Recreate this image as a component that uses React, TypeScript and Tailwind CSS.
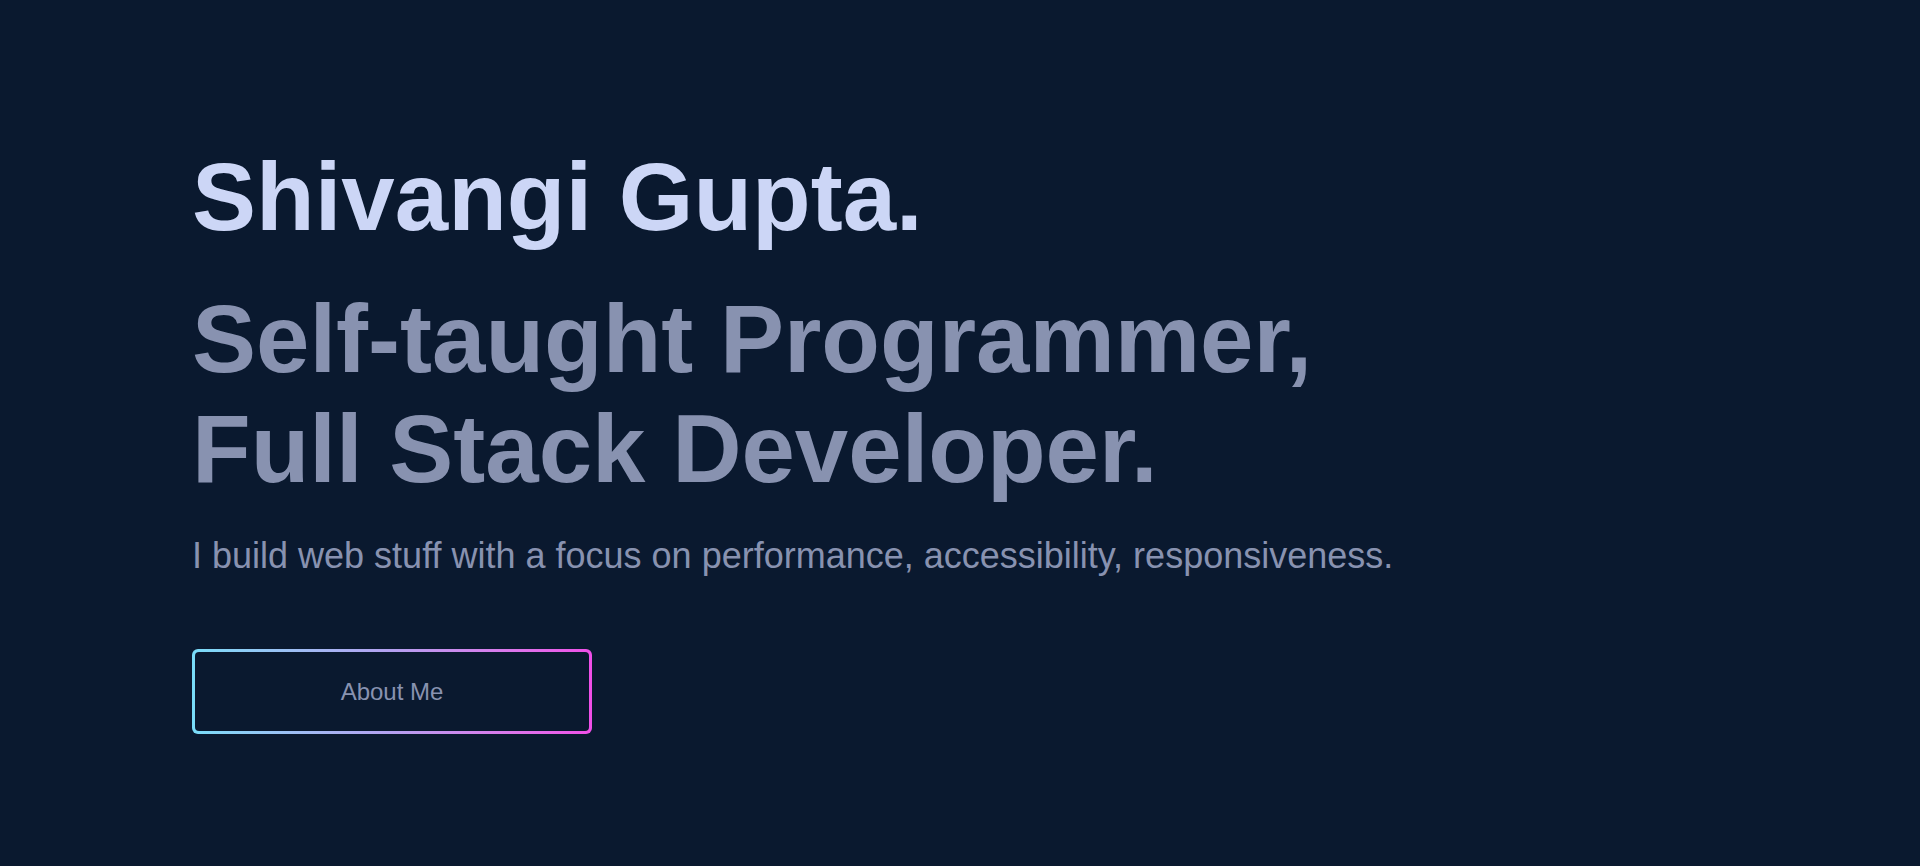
export default function App() {
  return (
    <div
      className="min-h-screen w-full bg-[#0a192f]"
      style={{ fontFamily: "'Liberation Sans', Arial, sans-serif" }}
    >
      <section className="flex flex-col items-start pl-[192px] pt-[142px]">
        {/* Name */}
        <h1 className="text-[96px] font-bold leading-[110px] text-[#ccd6f6]">Shivangi Gupta.</h1>

        {/* Tagline */}
        <h2 className="mt-[32px] text-[96px] font-bold leading-[110px] text-[#8892b0]">
          Self-taught Programmer,
          <br />
          Full Stack Developer.
        </h2>

        <p className="mt-[25px] text-[36px] leading-[54px] text-[#8892b0]">
          I build web stuff with a focus on performance, accessibility, responsiveness.
        </p>

        {/* CTA with gradient border */}
        <div className="mt-[66px] rounded-[6px] bg-gradient-to-r from-[#78dcf8] via-[#b4a0f0] to-[#f04ee8] p-[3px]">
          <button className="flex h-[79px] w-[394px] items-center justify-center rounded-[4px] bg-[#0a192f] text-[24px] text-[#8892b0]">
            About Me
          </button>
        </div>
      </section>
    </div>
  );
}
